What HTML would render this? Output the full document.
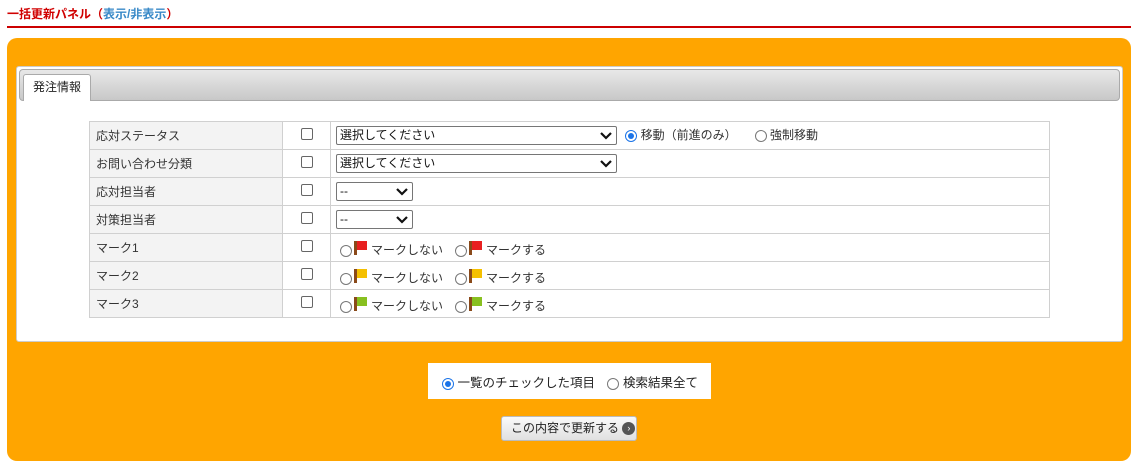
<!DOCTYPE html>
<html><head><meta charset="utf-8"><style>
*{box-sizing:border-box;margin:0;padding:0}
body{width:1139px;height:464px;background:#fff;font-family:"Liberation Sans","Noto Sans CJK JP",sans-serif;font-size:12px;color:#333;position:relative;overflow:hidden}
.a{position:absolute}
table{border-collapse:collapse;position:absolute;left:89px;top:121px;width:961px}
td{border:1px solid #d0d0d0;height:28px;font-size:12px;vertical-align:middle}
td.l{width:193px;background:#f3f3f3;padding-left:6px;color:#333}
td.c{width:48px;text-align:center}
td.v{padding-left:5px}
.cb{display:inline-block;width:12px;height:12px;border:1px solid #666;border-radius:2px;background:#fff;vertical-align:middle;margin-top:-4px}
.sel{display:inline-block;height:19px;border:1px solid #767676;border-radius:2px;background:#fff;vertical-align:middle;position:relative;padding-left:3px;line-height:17px;font-size:12px;color:#111}
.sel svg{position:absolute;right:4px;top:5px}
.r{display:inline-block;width:12px;height:12px;border:1px solid #777;border-radius:50%;background:#fff;vertical-align:middle;position:relative}
.r.on{border-color:#1a73e8}
.r.on:after{content:"";position:absolute;left:2px;top:2px;width:6px;height:6px;border-radius:50%;background:#1a73e8}
.f{display:inline-block;width:14px;height:14px;position:relative;vertical-align:middle;margin:0 3px 0 2px;top:-3px}
.f:before{content:"";position:absolute;left:0;top:0;width:3px;height:14px;background:#8a4a1a}
.f:after{content:"";position:absolute;left:3px;top:0;width:10px;height:9px;background:var(--c)}
</style></head><body>
<div class="a" style="left:7px;top:5px;font-size:12px;font-weight:bold;color:#d00000">一括更新パネル<span style="color:#d00000">（</span><span style="color:#3a8ac8">表示/非表示</span>）</div>
<div class="a" style="left:7px;top:26px;width:1124px;height:2px;background:#c00"></div>
<div class="a" style="left:7px;top:38px;width:1124px;height:423px;background:#ffa500;border-radius:10px"></div>
<div class="a" style="left:16px;top:66px;width:1107px;height:276px;background:#fff;border:1px solid #ccc;border-radius:3px"></div>
<div class="a" style="left:19px;top:69px;width:1101px;height:32px;background:linear-gradient(#e8e8e8,#c8c8c8);border:1px solid #aaa;border-radius:4px"></div>
<div class="a" style="left:23px;top:74px;width:68px;height:27px;background:#fff;border:1px solid #aaa;border-bottom:none;border-radius:3px 3px 0 0;text-align:center;line-height:24px;font-size:12px;color:#222">発注情報</div>
<table>
<tr><td class="l">応対ステータス</td><td class="c"><span class="cb"></span></td><td class="v"><span class="sel" style="width:281px">選択してください<svg width="12" height="8"><path d="M1 1l5 5 5-5" stroke="#111" stroke-width="2.2" fill="none"/></svg></span> <span class="r on" style="margin-left:5px"></span> 移動（前進のみ）　　<span class="r"></span> 強制移動</td></tr>
<tr><td class="l">お問い合わせ分類</td><td class="c"><span class="cb"></span></td><td class="v"><span class="sel" style="width:281px">選択してください<svg width="12" height="8"><path d="M1 1l5 5 5-5" stroke="#111" stroke-width="2.2" fill="none"/></svg></span></td></tr>
<tr><td class="l">応対担当者</td><td class="c"><span class="cb"></span></td><td class="v"><span class="sel" style="width:77px">--<svg width="12" height="8"><path d="M1 1l5 5 5-5" stroke="#111" stroke-width="2.2" fill="none"/></svg></span></td></tr>
<tr><td class="l">対策担当者</td><td class="c"><span class="cb"></span></td><td class="v"><span class="sel" style="width:77px">--<svg width="12" height="8"><path d="M1 1l5 5 5-5" stroke="#111" stroke-width="2.2" fill="none"/></svg></span></td></tr>
<tr><td class="l">マーク1</td><td class="c"><span class="cb"></span></td><td class="v" style="padding-top:4px;padding-left:9px"><span class="r"></span><span class="f" style="--c:#e82020"></span>マークしない　<span class="r"></span><span class="f" style="--c:#e82020"></span>マークする</td></tr>
<tr><td class="l">マーク2</td><td class="c"><span class="cb"></span></td><td class="v" style="padding-top:4px;padding-left:9px"><span class="r"></span><span class="f" style="--c:#f5c000"></span>マークしない　<span class="r"></span><span class="f" style="--c:#f5c000"></span>マークする</td></tr>
<tr><td class="l">マーク3</td><td class="c"><span class="cb"></span></td><td class="v" style="padding-top:4px;padding-left:9px"><span class="r"></span><span class="f" style="--c:#88c020"></span>マークしない　<span class="r"></span><span class="f" style="--c:#88c020"></span>マークする</td></tr>
</table>
<div class="a" style="left:428px;top:363px;width:283px;height:36px;background:#fff;padding:9px 0 0 14px;font-size:12.5px;color:#222"><span class="r on"></span> 一覧のチェックした項目　<span class="r"></span> 検索結果全て</div>
<div class="a" style="left:501px;top:416px;width:136px;height:25px;background:linear-gradient(#fafafa,#e0e0e0);border:1px solid #bbb;border-radius:3px;font-size:12px;line-height:23px;padding-left:9px;color:#222">この内容で更新する <span style="display:inline-block;width:13px;height:13px;border-radius:50%;background:#555;color:#fff;font-size:9px;line-height:13px;text-align:center;vertical-align:middle">›</span></div>
</body></html>
